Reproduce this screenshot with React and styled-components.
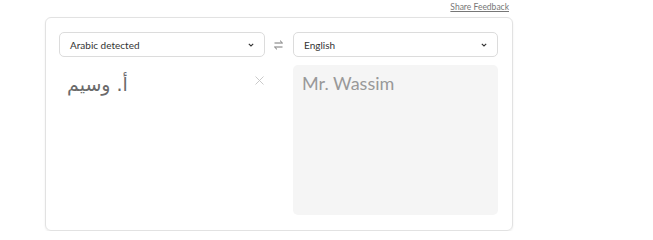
import React from 'react';
import styled, { createGlobalStyle } from 'styled-components';

const GlobalStyle = createGlobalStyle`
  body {
    margin: 0;
    background: #fff;
    font-family: Lato, "Noto Sans", sans-serif;
  }
`;

const Page = styled.div`
  width: 468px;
  margin-left: 45px;
  display: flex;
  flex-direction: column;
`;

const FeedbackRow = styled.div`
  display: flex;
  justify-content: flex-end;
  height: 17px;
  padding-right: 4px;
`;

const FeedbackLink = styled.a`
  font-size: 8.5px;
  color: #777;
  text-decoration: underline;
  margin-top: 2px;
  line-height: 10px;
  cursor: pointer;
`;

const Card = styled.div`
  box-sizing: border-box;
  height: 214px;
  border: 1px solid #e2e2e2;
  border-radius: 6px;
  box-shadow: 0 1px 2px rgba(0, 0, 0, 0.08);
  padding: 14px 14px 15px 13px;
  display: grid;
  grid-template-columns: 206px 28px 205px;
  grid-template-rows: 25px 1fr;
  row-gap: 8px;
`;

const Select = styled.div`
  box-sizing: border-box;
  height: 25px;
  border: 1px solid #dcdcdc;
  border-radius: 5px;
  display: flex;
  align-items: center;
  justify-content: space-between;
  padding: 0 10px 0 10px;
  font-size: 10px;
  color: #333;
`;

const Swap = styled.div`
  display: flex;
  align-items: center;
  justify-content: center;
  padding-right: 2px;
`;

const Source = styled.div`
  position: relative;
  padding: 8px 8px;
`;

const SourceText = styled.div`
  font-size: 19px;
  color: #6a6a6a;
  font-family: "DejaVu Sans", sans-serif;
  direction: ltr;
  text-align: left;
`;

const Clear = styled.div`
  position: absolute;
  top: 4px;
  right: 1px;
`;

const Output = styled.div`
  grid-column: 3;
  background: #f5f5f5;
  border-radius: 5px;
  padding: 7px 9px;
  font-size: 18px;
  color: #999;
`;

const Chevron = () => (
  <svg width="6" height="6" viewBox="0 0 6 6">
    <path d="M0.8 1.8 L3 4 L5.2 1.8" fill="none" stroke="#333" strokeWidth="1.1" />
  </svg>
);

const SwapIcon = () => (
  <svg width="9" height="10" viewBox="0 0 9 10">
    <path d="M0.5 3 H8.5 M6 0.6 L8.5 3 M8.5 7 H0.5 M3 9.4 L0.5 7" fill="none" stroke="#777" strokeWidth="1" />
  </svg>
);

const CloseIcon = () => (
  <svg width="9" height="9" viewBox="0 0 9 9">
    <path d="M0.5 0.5 L8.5 8.5 M8.5 0.5 L0.5 8.5" fill="none" stroke="#c4c4c4" strokeWidth="0.9" />
  </svg>
);

export default function App() {
  return (
    <>
      <GlobalStyle />
      <Page>
        <FeedbackRow>
          <FeedbackLink>Share Feedback</FeedbackLink>
        </FeedbackRow>
        <Card>
          <Select>
            Arabic detected
            <Chevron />
          </Select>
          <Swap>
            <SwapIcon />
          </Swap>
          <Select>
            English
            <Chevron />
          </Select>
          <Source>
            <SourceText>أ. وسيم</SourceText>
            <Clear>
              <CloseIcon />
            </Clear>
          </Source>
          <Output>Mr. Wassim</Output>
        </Card>
      </Page>
    </>
  );
}
